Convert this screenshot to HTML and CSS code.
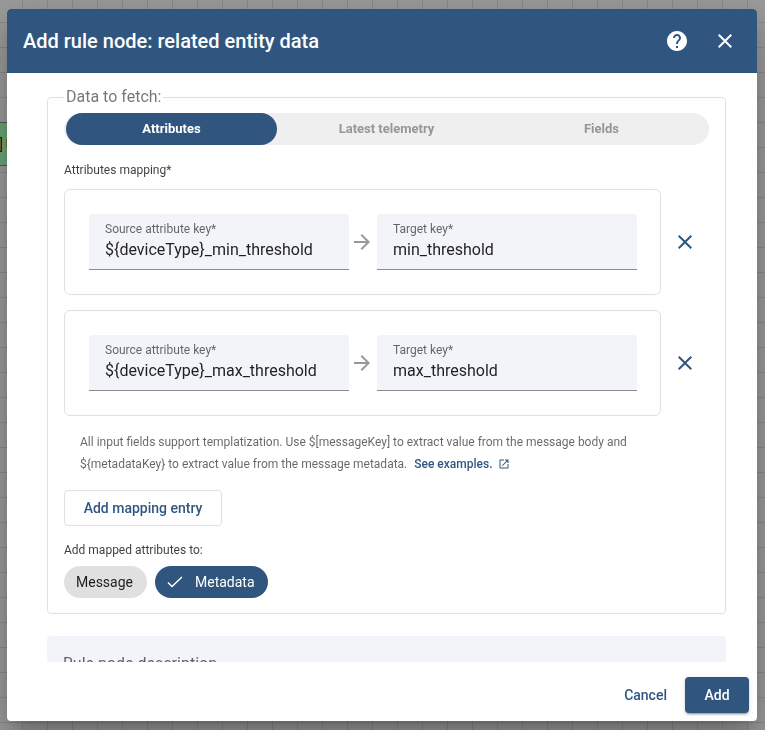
FILE: index.html
```html
<!DOCTYPE html>
<html lang="en">
<head>
<meta charset="utf-8">
<meta name="viewport" content="width=device-width, initial-scale=1">
<title>Add rule node</title>
<link rel="stylesheet" href="styles.css">
</head>
<body>
<div class="canvas" aria-hidden="true"><div class="node"><span class="node-icon"></span><span class="node-mark"></span></div></div>
<form class="dialog" role="dialog" aria-labelledby="dialog-title">
  <header class="toolbar">
    <h1 class="title" id="dialog-title">Add rule node: related entity data</h1>
    <button class="icon-button" type="button" aria-label="Help">
      <svg class="icon" viewBox="0 0 24 24"><path d="M12 2C6.480 2 2 6.480 2 12s4.480 10 10 10 10-4.480 10-10S17.520 2 12 2zm1 17h-2v-2h2v2zm2.070-7.750l-.9.920C13.450 12.900 13 13.500 13 15h-2v-.5c0-1.100.450-2.100 1.170-2.830l1.240-1.260c.370-.360.590-.860.590-1.410 0-1.100-.9-2-2-2s-2 .9-2 2H8c0-2.210 1.790-4 4-4s4 1.790 4 4c0 .880-.360 1.680-.930 2.250z"/></svg>
    </button>
    <button class="icon-button" type="button" aria-label="Close">
      <svg class="icon" viewBox="0 0 24 24"><path d="M19 6.410L17.590 5 12 10.590 6.410 5 5 6.410 10.590 12 5 17.590 6.410 19 12 13.410 17.590 19 19 17.590 13.410 12z"/></svg>
    </button>
  </header>

  <div class="content">
    <fieldset class="group">
      <legend class="legend">Data to fetch:</legend>
      <div class="tabs">
        <button class="tab tab-active" type="button" aria-pressed="true">Attributes</button>
        <button class="tab" type="button" aria-pressed="false">Latest telemetry</button>
        <button class="tab" type="button" aria-pressed="false">Fields</button>
      </div>

      <p class="caption">Attributes mapping*</p>
      <div class="mappings">
        <div class="mapping">
          <div class="card">
            <div class="field">
              <label class="field-label" for="source-1">Source attribute key*</label>
              <input class="field-input" id="source-1" type="text" value="${deviceType}_min_threshold">
            </div>
            <svg class="icon arrow" viewBox="0 0 24 24" aria-hidden="true"><path d="M12 4l-1.410 1.410L16.170 11H4v2h12.170l-5.580 5.590L12 20l8-8z"/></svg>
            <div class="field">
              <label class="field-label" for="target-1">Target key*</label>
              <input class="field-input" id="target-1" type="text" value="min_threshold">
            </div>
          </div>
          <button class="icon-button remove" type="button" aria-label="Remove">
            <svg class="icon" viewBox="0 0 24 24"><path d="M19 6.410L17.590 5 12 10.590 6.410 5 5 6.410 10.590 12 5 17.590 6.410 19 12 13.410 17.590 19 19 17.590 13.410 12z"/></svg>
          </button>
        </div>
        <div class="mapping">
          <div class="card">
            <div class="field">
              <label class="field-label" for="source-2">Source attribute key*</label>
              <input class="field-input" id="source-2" type="text" value="${deviceType}_max_threshold">
            </div>
            <svg class="icon arrow" viewBox="0 0 24 24" aria-hidden="true"><path d="M12 4l-1.410 1.410L16.170 11H4v2h12.170l-5.580 5.590L12 20l8-8z"/></svg>
            <div class="field">
              <label class="field-label" for="target-2">Target key*</label>
              <input class="field-input" id="target-2" type="text" value="max_threshold">
            </div>
          </div>
          <button class="icon-button remove" type="button" aria-label="Remove">
            <svg class="icon" viewBox="0 0 24 24"><path d="M19 6.410L17.590 5 12 10.590 6.410 5 5 6.410 10.590 12 5 17.590 6.410 19 12 13.410 17.590 19 19 17.590 13.410 12z"/></svg>
          </button>
        </div>
      </div>

      <p class="hint">All input fields support templatization. Use $[messageKey] to extract value from the message body and ${metadataKey} to extract value from the message metadata.
        <a class="link" href="#examples">See examples.<svg class="link-icon" viewBox="0 0 24 24" aria-hidden="true"><path d="M19 19H5V5h7V3H5c-1.110 0-2 .9-2 2v14c0 1.100.890 2 2 2h14c1.100 0 2-.9 2-2v-7h-2v7zM14 3v2h3.590l-9.830 9.830 1.410 1.410L19 6.410V10h2V3h-7z"/></svg></a>
      </p>

      <button class="button outlined" type="button">Add mapping entry</button>

      <p class="caption">Add mapped attributes to:</p>
      <div class="chips">
        <button class="chip" type="button" aria-pressed="false">Message</button>
        <button class="chip chip-selected" type="button" aria-pressed="true">
          <svg class="chip-icon" viewBox="0 0 18 18" aria-hidden="true"><path d="M1 9.500L5 13.500L15 4"/></svg>Metadata</button>
      </div>
    </fieldset>

    <div class="description">
      <label class="description-label" for="description">Rule node description</label>
      <textarea class="description-input" id="description" rows="2"></textarea>
    </div>
  </div>

  <footer class="actions">
    <button class="button" type="button">Cancel</button>
    <button class="button filled" type="submit">Add</button>
  </footer>
</form>
</body>
</html>
```
FILE: styles.css
```css
:root {
  --primary: #305680;
  --outline: #e0e0e0;
  --field: #f3f4f9;
}

* {
  box-sizing: border-box;
}

body {
  margin: 0;
  height: 100vh;
  overflow: hidden;
  padding: 9px 8px 9px 7px;
  font-family: Roboto, "Liberation Sans", sans-serif;
  font-size: 16px;
  line-height: 24px;
  color: rgba(0, 0, 0, 0.87);
}

button,
input,
textarea {
  font: inherit;
  color: inherit;
  margin: 0;
  padding: 0;
  border: 0;
  background: none;
}

p {
  margin: 0;
}

/* Rule chain canvas behind the dialog */
.canvas {
  position: fixed;
  inset: 0;
  z-index: -1;
  background-color: #9c9c9c;
  background-image:
    linear-gradient(to right, #8b8b8b 1px, transparent 1px),
    linear-gradient(to bottom, #8b8b8b 1px, transparent 1px);
  background-size: 25px 25px;
  background-position: 22px 22px;
}

.node {
  position: absolute;
  left: -140px;
  top: 122px;
  width: 150px;
  height: 44px;
  border: 1px solid #555;
  background: #6ca77a;
}

.node-icon {
  position: absolute;
  right: 7px;
  top: 14px;
  width: 14px;
  height: 15px;
  border: 1px solid #222;
  background: #75642f;
}

.node-mark {
  position: absolute;
  right: 0;
  top: 16px;
  width: 3px;
  height: 9px;
  background: #75762f;
}

.dialog {
  display: flex;
  flex-direction: column;
  height: 100%;
  margin: 0;
  overflow: hidden;
  border-radius: 4px;
  background: #fff;
  box-shadow:
    0 11px 15px -7px rgba(0, 0, 0, 0.2),
    0 24px 38px 3px rgba(0, 0, 0, 0.14),
    0 9px 46px 8px rgba(0, 0, 0, 0.12);
}

.toolbar {
  display: flex;
  flex: none;
  align-items: center;
  height: 64px;
  padding: 0 8px 0 16px;
  background: var(--primary);
  color: #fff;
}

.title {
  flex: 1;
  margin: 0;
  font-size: 20px;
  font-weight: 500;
}

.icon-button {
  display: grid;
  flex: none;
  place-items: center;
  width: 48px;
  height: 48px;
}

.icon {
  display: block;
  width: 24px;
  height: 24px;
  fill: currentColor;
}

.content {
  flex: 1;
  min-height: 0;
  overflow: hidden;
  padding: 12px 31px 0 40px;
}

.group {
  min-width: 0;
  margin: 0 0 22px;
  padding: 4px 16px 15px;
  border: 1px solid var(--outline);
  border-radius: 4px;
}

.legend {
  padding: 0 2px;
  color: rgba(0, 0, 0, 0.54);
}

.tabs {
  display: grid;
  grid-template-columns: repeat(3, 1fr);
  height: 32px;
  margin-bottom: 15px;
  border-radius: 16px;
  background: #efefef;
}

.tab {
  margin: 0 2px;
  border-radius: 16px;
  font-size: 13px;
  font-weight: 700;
  color: #969696;
}

.tab-active {
  background: var(--primary);
  color: #fff;
}

.caption {
  font-size: 12px;
  line-height: 20px;
  color: rgba(0, 0, 0, 0.76);
}

.mappings {
  display: grid;
  gap: 15px;
  margin-top: 9px;
}

.mapping {
  display: flex;
  align-items: center;
}

.card {
  display: flex;
  flex: 1;
  align-items: center;
  min-width: 0;
  padding: 24px 23px 24px 24px;
  border: 1px solid var(--outline);
  border-radius: 6px;
}

.field {
  display: flex;
  flex: 1;
  flex-direction: column;
  min-width: 0;
  height: 56px;
  padding: 6px 16px 0;
  border-bottom: 1px solid #8c8d92;
  border-radius: 4px 4px 0 0;
  background: var(--field);
}

.field-label {
  font-size: 12px;
  line-height: 18px;
  color: rgba(0, 0, 0, 0.6);
}

.field-input {
  width: 100%;
  height: 24px;
}

.arrow {
  flex: none;
  margin: 0 3px 0 1px;
  color: #999;
}

.remove {
  color: var(--primary);
}

.hint {
  margin: 15px 16px;
  font-size: 12px;
  line-height: 22px;
  color: rgba(0, 0, 0, 0.6);
}

.link {
  margin-left: 4px;
  font-weight: 500;
  color: var(--primary);
  text-decoration: none;
}

.link-icon {
  width: 12px;
  height: 12px;
  margin-left: 5px;
  vertical-align: -2px;
  fill: currentColor;
}

.button {
  height: 36px;
  padding: 0 16px;
  border-radius: 4px;
  font-size: 14px;
  font-weight: 500;
  color: var(--primary);
}

.outlined {
  min-width: 158px;
  margin-bottom: 14px;
  border: 1px solid var(--outline);
}

.chips {
  display: flex;
  gap: 8px;
  margin-top: 6px;
}

.chip {
  display: flex;
  align-items: center;
  min-width: 83px;
  height: 32px;
  padding: 0 12px;
  border-radius: 16px;
  background: #e0e0e0;
  font-size: 14px;
}

.chip-selected {
  gap: 10px;
  min-width: 113px;
  background: var(--primary);
  color: #fff;
}

.chip-icon {
  width: 18px;
  height: 18px;
  fill: none;
  stroke: currentColor;
  stroke-width: 1.500;
}

.description {
  padding: 16px;
  border-radius: 4px 4px 0 0;
  background: var(--field);
}

.description-label {
  display: block;
  color: rgba(0, 0, 0, 0.6);
}

.description-input {
  display: block;
  width: 100%;
  resize: none;
}

.actions {
  display: flex;
  flex: none;
  justify-content: flex-end;
  gap: 2px;
  padding: 15px 8px 8px;
}

.filled {
  min-width: 64px;
  background: var(--primary);
  color: #fff;
  box-shadow:
    0 3px 1px -2px rgba(0, 0, 0, 0.2),
    0 2px 2px rgba(0, 0, 0, 0.14),
    0 1px 5px rgba(0, 0, 0, 0.12);
}
```
